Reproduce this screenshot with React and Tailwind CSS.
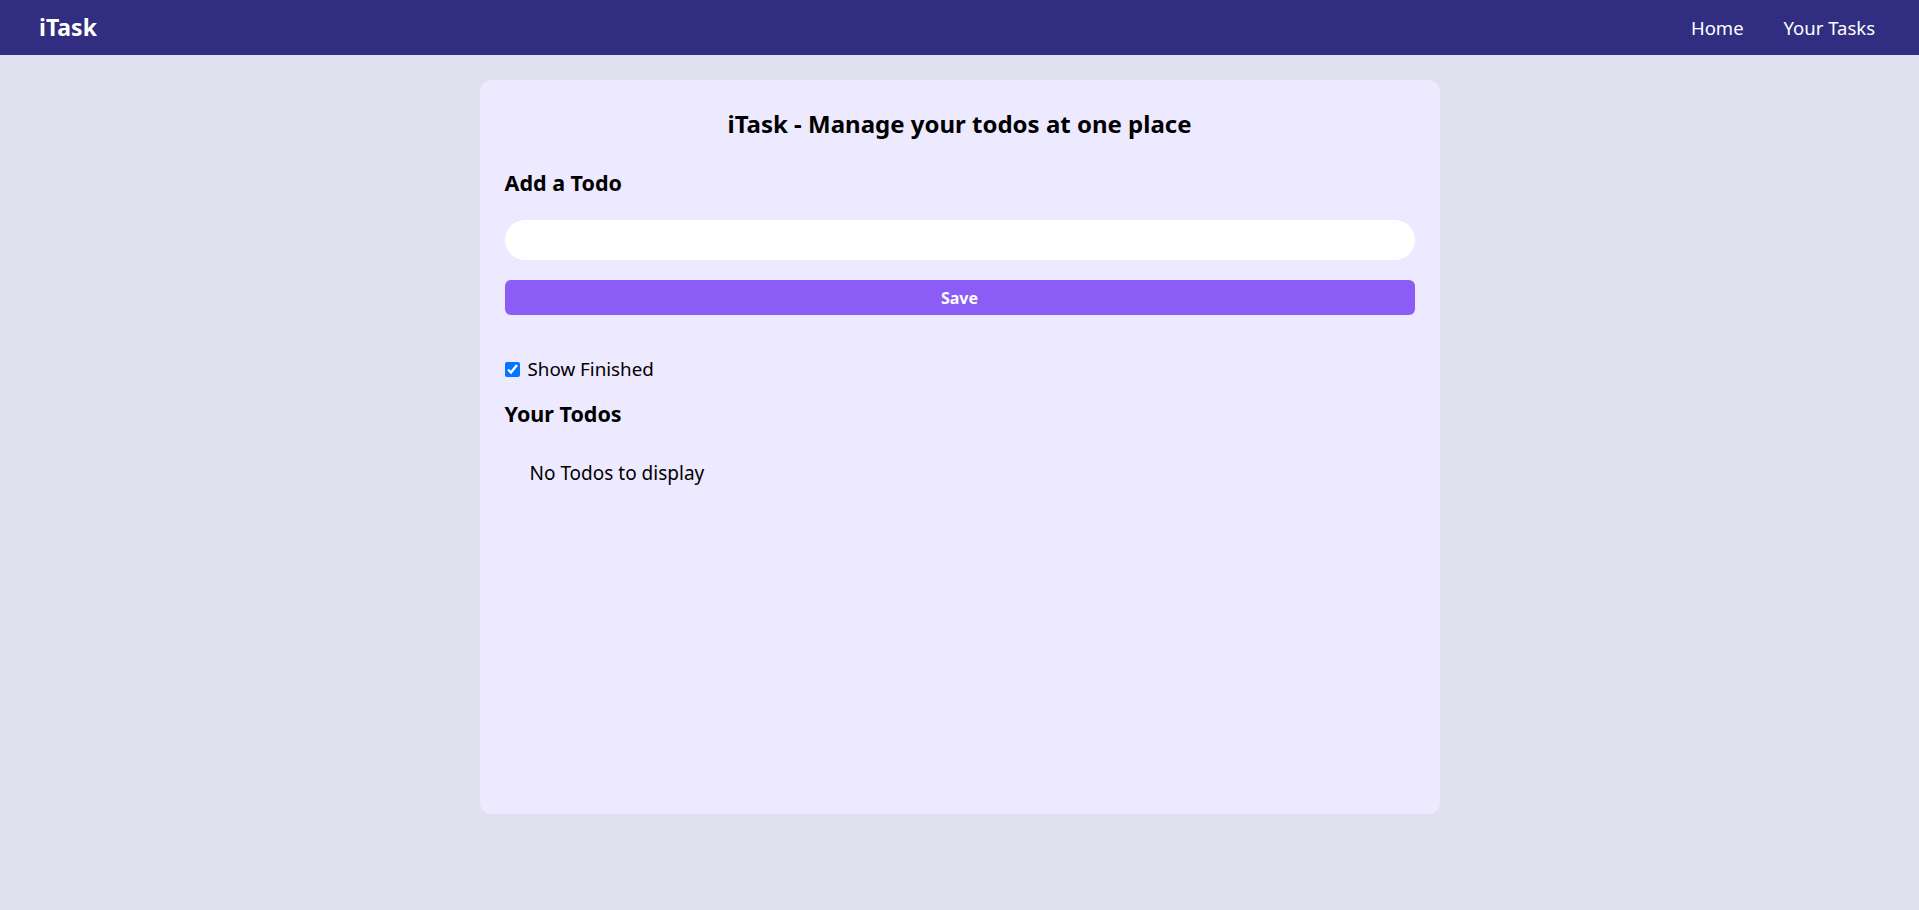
import { useState } from "react";

const Navbar = () => {
  return (
    <nav className="flex h-[55px] items-center justify-between bg-[#312e81] text-white">
      <div className="pl-[39px]">
        <span className="text-[23px] font-bold">iTask</span>
      </div>
      <ul className="flex gap-[40px] pr-[44px] text-[18.5px] leading-7">
        <li className="cursor-pointer">Home</li>
        <li className="cursor-pointer">Your Tasks</li>
      </ul>
    </nav>
  );
};

const App = () => {
  const [todo, setTodo] = useState("");
  const [todos, setTodos] = useState([]);
  const [showFinished, setShowFinished] = useState(true);

  const handleAdd = () => {
    if (todo.trim().length < 1) return;
    setTodos([...todos, { id: Date.now(), todo, isCompleted: false }]);
    setTodo("");
  };

  const visible = todos.filter((t) => showFinished || !t.isCompleted);

  return (
    <div className="min-h-[910px] bg-[#e1e0ee] font-['Noto_Sans',sans-serif] text-black">
      <Navbar />
      <div className="mx-auto mt-[25px] h-[734px] w-[960px] rounded-xl bg-[#ede9fe] px-[25px] pt-[28px]">
        <h1 className="text-center text-2xl font-bold">iTask - Manage your todos at one place</h1>

        <div className="mt-[29px] flex flex-col">
          <h2 className="text-[21.5px] leading-7 font-bold">Add a Todo</h2>
          <input
            type="text"
            value={todo}
            onChange={(e) => setTodo(e.target.value)}
            className="mt-[23px] h-10 w-full rounded-full bg-white px-5 py-1 outline-none"
          />
          <button
            onClick={handleAdd}
            className="mt-5 h-[35px] w-full cursor-pointer rounded-md bg-[#8b5cf6] text-base font-bold text-white"
          >
            Save
          </button>
        </div>

        <label className="mt-[40px] flex items-center gap-2 text-[18.8px] leading-7">
          <input
            type="checkbox"
            checked={showFinished}
            onChange={() => setShowFinished(!showFinished)}
            className="h-[15px] w-[15px]"
          />
          Show Finished
        </label>

        <h2 className="mt-[17px] text-[21.5px] leading-7 font-bold">Your Todos</h2>

        <div className="mt-[31px]">
          {visible.length === 0 && (
            <div className="ml-[25px] text-[19px] leading-7">No Todos to display</div>
          )}
          {visible.map((item) => (
            <div key={item.id} className="my-3 flex justify-between">
              <div className={item.isCompleted ? "line-through" : ""}>{item.todo}</div>
            </div>
          ))}
        </div>
      </div>
    </div>
  );
};

export default App;
